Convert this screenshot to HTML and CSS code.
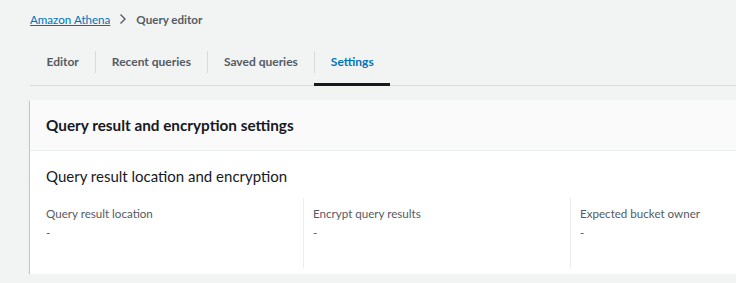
FILE: index.html
```html
<!DOCTYPE html>
<html lang="en">
<head>
    <meta charset="UTF-8">
    <title>Query editor - Amazon Athena</title>
    <link rel="stylesheet" href="styles.css">
</head>
<body>
    <div class="page">
        <nav class="breadcrumbs">
            <a href="#" class="crumb-link">Amazon Athena</a>
            <svg class="crumb-sep" width="10" height="12" viewBox="0 0 10 12">
                <path d="M2.5 1.5 L7 6 L2.5 10.5" fill="none" stroke="#545b64" stroke-width="1.4"/>
            </svg>
            <span class="crumb-current">Query editor</span>
        </nav>

        <div class="tabs">
            <a href="#" class="tab">Editor</a>
            <a href="#" class="tab">Recent queries</a>
            <a href="#" class="tab">Saved queries</a>
            <a href="#" class="tab active">Settings</a>
        </div>

        <div class="card">
            <div class="card-header">
                <h2>Query result and encryption settings</h2>
            </div>
            <div class="card-body">
                <h3>Query result location and encryption</h3>
                <div class="columns">
                    <div class="column">
                        <div class="label">Query result location</div>
                        <div class="value">-</div>
                    </div>
                    <div class="column">
                        <div class="label">Encrypt query results</div>
                        <div class="value">-</div>
                    </div>
                    <div class="column">
                        <div class="label">Expected bucket owner</div>
                        <div class="value">-</div>
                    </div>
                </div>
            </div>
        </div>
    </div>
</body>
</html>
```

FILE: styles.css
```css
body {
    margin: 0;
    background-color: #f2f3f3;
    font-family: Lato, 'Liberation Sans', sans-serif;
    color: #16191f;
    font-size: 14px;
    overflow: hidden;
}

.page {
    padding: 9px 0 0 30px;
    overflow: hidden;
}

.breadcrumbs {
    display: flex;
    align-items: center;
    height: 20px;
    font-size: 11.6px;
}

.crumb-link {
    color: #0073bb;
    text-decoration: underline;
}

.crumb-sep {
    margin: 0 8px 0 8px;
}

.crumb-current {
    color: #545b64;
    font-weight: 700;
}

.tabs {
    display: flex;
    margin-top: 11px;
    border-bottom: 1px solid #d5dbdb;
    height: 45px;
}

.tab {
    position: relative;
    display: flex;
    align-items: center;
    padding: 0 16.5px;
    color: #545b64;
    font-weight: 700;
    font-size: 12px;
    text-decoration: none;
    border-bottom: 3px solid transparent;
    margin-bottom: -1px;
    box-sizing: border-box;
}

.tab + .tab::before {
    content: '';
    position: absolute;
    left: 0;
    top: 11px;
    height: 22px;
    border-left: 1px solid #d5dbdb;
}

.tab.active {
    color: #0073bb;
    border-bottom-color: #16191f;
}

.card {
    margin-top: 14px;
    background-color: #ffffff;
    box-shadow: 0 1px 1px 0 rgba(0, 28, 36, 0.3), 1px 1px 1px 0 rgba(0, 28, 36, 0.15), -1px 1px 1px 0 rgba(0, 28, 36, 0.15);
    width: 760px;
}

.card-header {
    background-color: #fafafa;
    border-bottom: 1px solid #eaeded;
    height: 50px;
    padding: 0 16px;
    display: flex;
    align-items: center;
}

.card-header h2 {
    margin: 0;
    font-size: 15.3px;
    font-weight: 700;
}

.card-body {
    padding: 14px 16px 6px;
}

.card-body h3 {
    margin: 0;
    font-size: 15px;
    font-weight: 400;
    line-height: 22px;
}

.columns {
    display: grid;
    grid-template-columns: 257px 267px 1fr;
    margin-top: 11px;
}

.column {
    padding: 7px 10px 21px 9px;
    height: 42px;
    border-left: 1px solid #eaeded;
}

.column:first-child {
    padding-left: 0;
    border-left: none;
}

.label {
    color: #545b64;
    font-size: 11.6px;
    line-height: 18px;
}

.value {
    color: #545b64;
    font-size: 11.6px;
    line-height: 18px;
    margin-top: 1px;
}
```
